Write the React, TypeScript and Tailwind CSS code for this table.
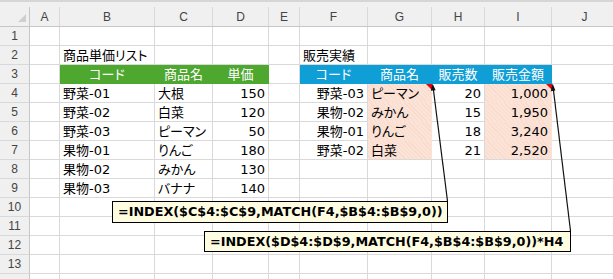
import React from "react";

type Fill = "g" | "b" | "p";
type Cell = { v?: string; a?: "l" | "r" | "c"; f?: Fill; last?: boolean };

const letters = ["A", "B", "C", "D", "E", "F", "G", "H", "I", "J"];
const gridCols = "grid grid-cols-[30px_30px_95px_58px_56px_31px_68px_64px_53px_67px_66px]";

const fillCls: Record<Fill, string> = {
  g: "bg-[#4ea72e] border-[#4ea72e] text-white",
  b: "bg-[#0f9ed5] border-[#0f9ed5] text-white",
  p: "bg-[repeating-linear-gradient(45deg,#fbe3d7_0px,#fbe3d7_2px,#f9dacb_2px,#f9dacb_3px)] border-[#fbe2d5]",
};

const rows: Record<number, Partial<Record<string, Cell>>> = {
  2: { B: { v: "商品単価リスト" }, F: { v: "販売実績" } },
  3: {
    B: { v: "コード", a: "c", f: "g" },
    C: { v: "商品名", a: "c", f: "g" },
    D: { v: "単価", a: "c", f: "g" },
    F: { v: "コード", a: "c", f: "b" },
    G: { v: "商品名", a: "c", f: "b" },
    H: { v: "販売数", a: "c", f: "b" },
    I: { v: "販売金額", a: "c", f: "b" },
  },
  4: {
    B: { v: "野菜-01" }, C: { v: "大根" }, D: { v: "150", a: "r" },
    F: { v: "野菜-03", a: "r" }, G: { v: "ピーマン", f: "p" }, H: { v: "20", a: "r" }, I: { v: "1,000", a: "r", f: "p" },
  },
  5: {
    B: { v: "野菜-02" }, C: { v: "白菜" }, D: { v: "120", a: "r" },
    F: { v: "果物-02", a: "r" }, G: { v: "みかん", f: "p" }, H: { v: "15", a: "r" }, I: { v: "1,950", a: "r", f: "p" },
  },
  6: {
    B: { v: "野菜-03" }, C: { v: "ピーマン" }, D: { v: "50", a: "r" },
    F: { v: "果物-01", a: "r" }, G: { v: "りんご", f: "p" }, H: { v: "18", a: "r" }, I: { v: "3,240", a: "r", f: "p" },
  },
  7: {
    B: { v: "果物-01" }, C: { v: "りんご" }, D: { v: "180", a: "r" },
    F: { v: "野菜-02", a: "r" }, G: { v: "白菜", f: "p", last: true }, H: { v: "21", a: "r" }, I: { v: "2,520", a: "r", f: "p", last: true },
  },
  8: { B: { v: "果物-02" }, C: { v: "みかん" }, D: { v: "130", a: "r" } },
  9: { B: { v: "果物-03" }, C: { v: "バナナ" }, D: { v: "140", a: "r" } },
};

function SheetCell({ c }: { c?: Cell }) {
  const align = c?.a === "r" ? "justify-end" : c?.a === "c" ? "justify-center" : "justify-start";
  let color = "border-[#d9d9d9]";
  if (c?.f) color = fillCls[c.f];
  if (c?.last) color = fillCls.p.replace("border-[#fbe2d5]", "border-r-[#fbe2d5] border-b-[#d9d9d9]");
  return (
    <div className={`h-[19px] flex items-center pt-px px-[3px] border-r border-b whitespace-nowrap overflow-visible ${align} ${color}`}>
      {c?.v}
    </div>
  );
}

function Formula({ className, text }: { className: string; text: string }) {
  return (
    <div
      className={`absolute flex items-center pl-[5px] bg-[#fffde1] border border-black text-black font-bold text-[12.75px] font-['DejaVu_Sans',sans-serif] whitespace-nowrap ${className}`}
    >
      {text}
    </div>
  );
}

export default function App() {
  // row 14 is only partly in view, so its number is left off
  const rowNums = Array.from({ length: 14 }, (_, i) => i + 1);
  return (
    <div className="relative w-[613px] h-[279px] overflow-hidden bg-white">
      {/* strip above the column headings */}
      <div className="h-[7px] bg-[#f0f0f0] border-t-2 border-[#d6d6d6]" />

      {/* column headings */}
      <div className={`${gridCols} h-[20px] bg-[#f0f0f0] border-b border-[#c6c6c6] text-[12px] text-[#444] font-['Liberation_Sans',sans-serif]`}>
        <div className="relative border-r border-[#c6c6c6]">
          <div className="absolute right-[3px] bottom-[4px] w-0 h-0 border-l-[8px] border-l-transparent border-b-[8px] border-b-[#cfcfcf]" />
        </div>
        {letters.map((l) => (
          <div key={l} className="flex items-center justify-center border-r border-[#d9d9d9]">
            {l}
          </div>
        ))}
      </div>

      {/* sheet body */}
      {rowNums.map((n) => (
        <div
          key={n}
          className={`${gridCols} text-[13px] text-black font-['DejaVu_Sans','Noto_Sans_CJK_JP',sans-serif] [font-feature-settings:'palt']`}
        >
          <div className="h-[19px] flex items-center justify-center bg-[#f0f0f0] border-r border-r-[#c6c6c6] border-b border-b-[#d9d9d9] text-[12px] text-[#444] font-['Liberation_Sans',sans-serif]">
            {n < 14 ? n : ""}
          </div>
          {letters.map((l) => (
            <SheetCell key={l} c={rows[n]?.[l]} />
          ))}
        </div>
      ))}

      {/* callout arrows from the looked-up cells */}
      <svg className="absolute inset-0 pointer-events-none" width="613" height="279">
        <polygon points="426,84 432,84 432,90" fill="#e60012" />
        <polygon points="546,84 552,84 552,90" fill="#e60012" />
        <line x1="433.2" y1="88" x2="447.5" y2="201" stroke="#111" strokeWidth="1.2" />
        <polygon points="432.6,83.4 435.6,90.2 430.8,90.8" fill="#111" />
        <line x1="553.2" y1="88" x2="570.5" y2="231" stroke="#111" strokeWidth="1.2" />
        <polygon points="552.6,83.6 555.4,90.6 550.8,91.2" fill="#111" />
      </svg>

      <Formula className="left-[112px] top-[201px] w-[336px] h-[22px]" text="=INDEX($C$4:$C$9,MATCH(F4,$B$4:$B$9,0))" />
      <Formula className="left-[204px] top-[231px] w-[367px] h-[21px]" text="=INDEX($D$4:$D$9,MATCH(F4,$B$4:$B$9,0))*H4" />
    </div>
  );
}
